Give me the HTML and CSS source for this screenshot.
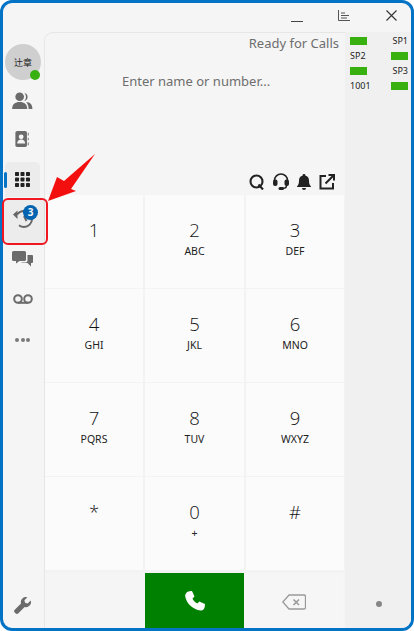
FILE: index.html
```html
<!DOCTYPE html>
<html lang="en">
<head>
<meta charset="utf-8">
<title>Dialer</title>
<link rel="stylesheet" href="styles.css">
</head>
<body>
<div class="window">
  <aside class="sidebar">
    <div class="avatar">辻章<span class="presence"></span></div>
    <button class="nav"><svg viewBox="0 0 22 18" width="21" height="17"><circle cx="8" cy="5" r="4.6" fill="#6b6b6b"/><path d="M0 18c0-5 3-7.500 8-7.500s8 2.500 8 7.500z" fill="#6b6b6b"/><path d="M13 1a4.300 4.300 0 0 1 0 8.400 6 6 0 0 0 0-8.400zM15 10.500c4 .3 6.500 2.500 6.500 7.500h-4c0-3-1-5.500-2.500-7.500z" fill="#6b6b6b"/></svg></button>
    <button class="nav nav-book"><svg viewBox="0 0 16 18" width="15" height="16"><rect x="0" y="0" width="13" height="18" rx="2" fill="#6b6b6b"/><circle cx="6.500" cy="6.500" r="2.700" fill="#f5f5f5"/><path d="M2 14c0-3 2-4.500 4.500-4.500S11 11 11 14z" fill="#f5f5f5"/><path d="M14.500 2v3M14.500 7.500v3M14.500 13v3" stroke="#8a8a8a" stroke-width="1.300"/></svg></button>
    <button class="nav nav-active">
      <span class="marker"></span>
      <svg viewBox="0 0 15 15" width="15" height="15" fill="#222"><rect x="0" y="0" width="4" height="4" rx=".8"/><rect x="5.500" y="0" width="4" height="4" rx=".8"/><rect x="11" y="0" width="4" height="4" rx=".8"/><rect x="0" y="5.500" width="4" height="4" rx=".8"/><rect x="5.500" y="5.500" width="4" height="4" rx=".8"/><rect x="11" y="5.500" width="4" height="4" rx=".8"/><rect x="0" y="11" width="4" height="4" rx=".8"/><rect x="5.500" y="11" width="4" height="4" rx=".8"/><rect x="11" y="11" width="4" height="4" rx=".8"/></svg>
    </button>
    <button class="nav nav-history">
      <svg viewBox="0 0 20 22" width="20" height="22" fill="none" stroke="#6b6b6b" stroke-width="2"><path d="M4 8.500C6 6 8.500 5 11 5a8 8 0 0 1 0 16c-2 0-3.500-.6-5-1.800"/><path d="M11 10l2.500 5"/><path d="M0 8.500L4.500 4.500V13z" fill="#6b6b6b" stroke="none"/></svg>
      <span class="badge">3</span>
    </button>
    <button class="nav nav-chat"><svg viewBox="0 0 21 16" width="21" height="16" fill="#6b6b6b"><path d="M1.500 0h11a1.500 1.500 0 0 1 1.500 1.500v7a1.500 1.500 0 0 1-1.500 1.500H7.500L4 12.500V10H1.500A1.500 1.500 0 0 1 0 8.500v-7A1.500 1.500 0 0 1 1.500 0z"/><path d="M15.500 4H20a1 1 0 0 1 1 1v6a1 1 0 0 1-1 1h-1v3.500L15.500 12H9.500v-.5h4a2 2 0 0 0 2-2z"/></svg></button>
    <button class="nav nav-voicemail"><svg viewBox="0 0 20 10" width="20" height="10" fill="none" stroke="#6b6b6b" stroke-width="2"><circle cx="5" cy="5" r="3.800"/><circle cx="15" cy="5" r="3.800"/><path d="M5 8.800h10"/></svg></button>
    <button class="nav nav-more"><span class="dot"></span><span class="dot"></span><span class="dot"></span></button>
    <button class="nav nav-tool"><svg viewBox="0 0 16 16" width="17" height="17"><path d="M15.700 3.300l-2.900 2.800-2.400-.6-.6-2.400L12.600.3a4.700 4.700 0 0 0-6 5.700L.7 11.900a1.900 1.900 0 0 0 0 2.700l.7.700a1.900 1.900 0 0 0 2.700 0L10 9.400a4.700 4.700 0 0 0 5.700-6.100z" fill="#6b6b6b"/></svg></button>
  </aside>

  <div class="content">
    <header class="titlebar">
      <span class="win-min"></span>
      <svg class="win-sort" viewBox="0 0 12 11" width="12" height="11" fill="none" stroke="#555" stroke-width="1"><path d="M.5 0v10.500H12M3 3h4M3 5.500h8M3 8h6"/></svg>
      <svg class="win-close" viewBox="0 0 11 11" width="11" height="11" fill="none" stroke="#333" stroke-width="1.100"><path d="M.5.500l10 10M10.500.500l-10 10"/></svg>
    </header>
    <div class="body">
      <main class="dialer">
        <div class="top">
          <div class="status">Ready for Calls</div>
          <div class="search">Enter name or number...</div>
          <div class="tools">
            <svg viewBox="0 0 16 16" width="16" height="16" fill="none" stroke="#222" stroke-width="2.100"><circle cx="7.500" cy="7.500" r="6"/><path d="M9.500 10.500l4.500 5"/></svg>
            <svg viewBox="0 0 16 17" width="16" height="17" fill="none" stroke="#222" stroke-width="1.500"><path d="M1.500 9V7.500a6.500 6.500 0 0 1 13 0V9"/><rect x="0" y="6.500" width="4.500" height="6.500" rx="2" fill="#222" stroke="none"/><rect x="11.500" y="6.500" width="4.500" height="6.500" rx="2" fill="#222" stroke="none"/><path d="M13.500 12.500c0 2-1.500 2.800-3.500 2.800"/><rect x="5.500" y="14" width="5.500" height="3" rx="1.500" fill="#222" stroke="none"/></svg>
            <svg viewBox="0 0 14 16" width="14" height="16" fill="#222"><path d="M7 0a1.300 1.300 0 0 1 1.300 1.500C10.800 2 12 4 12 6.500c0 3 .5 4.500 2 6V13H0v-.5c1.500-1.500 2-3 2-6C2 4 3.200 2 5.700 1.500A1.300 1.300 0 0 1 7 0z"/><path d="M5 14h4a2 2 0 0 1-4 0z"/></svg>
            <svg viewBox="0 0 16 16" width="16" height="16" fill="none" stroke="#222" stroke-width="2"><path d="M7 2H1.500v12.500H14V9"/><path d="M6.500 9.500L14.500 1.500M9.500 1H15v5.500"/></svg>
          </div>
        </div>
        <div class="keypad">
          <button class="key"><span class="digit">1</span></button>
          <button class="key"><span class="digit">2</span><span class="letters">ABC</span></button>
          <button class="key"><span class="digit">3</span><span class="letters">DEF</span></button>
          <button class="key"><span class="digit">4</span><span class="letters">GHI</span></button>
          <button class="key"><span class="digit">5</span><span class="letters">JKL</span></button>
          <button class="key"><span class="digit">6</span><span class="letters">MNO</span></button>
          <button class="key"><span class="digit">7</span><span class="letters">PQRS</span></button>
          <button class="key"><span class="digit">8</span><span class="letters">TUV</span></button>
          <button class="key"><span class="digit">9</span><span class="letters">WXYZ</span></button>
          <button class="key"><span class="digit">*</span></button>
          <button class="key"><span class="digit">0</span><span class="letters">+</span></button>
          <button class="key"><span class="digit">#</span></button>
        </div>
        <div class="actions">
          <span class="action-blank"></span>
          <button class="call"><svg viewBox="0 0 20 20" width="20" height="20" fill="#fff"><path d="M4.500.300L7 0l2.500 5.500-2 2c.8 2 2.500 3.800 4.800 5l2-2L20 13l-.3 3c-.2 2-2 3.700-4 3.500C7.500 18.500 1 12 .2 5 0 3 2 .6 4.500.300z"/></svg></button>
          <button class="erase"><svg viewBox="0 0 24 16" width="24" height="16" fill="none" stroke="#9a9a9a" stroke-width="1.300"><path d="M7 1h15a1.500 1.500 0 0 1 1.500 1.500v11A1.500 1.500 0 0 1 22 15H7L.8 8z"/><path d="M11.500 5.500l5.500 5.500M17 5.500L11.500 11" stroke-width="1.600"/></svg></button>
        </div>
      </main>
      <aside class="lines">
        <div class="lines-grid">
          <span class="led"></span><span class="line-name right">SP1</span>
          <span class="line-name">SP2</span><span class="led right"></span>
          <span class="led"></span><span class="line-name right">SP3</span>
          <span class="line-name">1001</span><span class="led right"></span>
        </div>
        <span class="lines-dot"></span>
      </aside>
    </div>
  </div>
</div>

<div class="callout"></div>
<svg class="arrow" viewBox="0 0 52 52" width="52" height="52"><path d="M49 2L18 29 11 25 2 49 30 39 25 37z" fill="#f40f0f"/></svg>
</body>
</html>
```
FILE: styles.css
```css
* { box-sizing: border-box; }
html, body { margin: 0; height: 100%; }
body { font-family: "Noto Sans", "Noto Sans CJK SC", sans-serif; background: #fff; overflow: hidden; }
button { border: 0; padding: 0; background: none; font: inherit; color: inherit; }

.window {
  width: 414px; height: 631px;
  display: flex;
  border: 3px solid #0373c6;
  border-radius: 12px;
  background: #f5f5f5;
  overflow: hidden;
}

.sidebar {
  width: 41px;
  flex: none;
  display: flex;
  flex-direction: column;
  align-items: flex-start;
  padding-top: 41px;
}
.avatar {
  position: relative;
  width: 36px; height: 36px;
  margin-left: 2px;
  flex: none;
  border-radius: 50%;
  background: #cfcfcf;
  font-family: "Noto Sans CJK SC", sans-serif;
  font-size: 9px;
  color: #222;
  display: flex; align-items: center; justify-content: center;
}
.presence {
  position: absolute; right: 1px; bottom: 0;
  width: 10px; height: 10px;
  border-radius: 50%;
  background: #37b010;
}
.nav {
  position: relative;
  width: 35px; height: 38px;
  flex: none;
  display: flex; align-items: center; justify-content: center;
  margin-left: 2px;
}
.avatar + .nav { margin-top: 1px; }
.nav-book { height: 39px; }
.nav-active { height: 35px; margin-top: 4px; background: #ececec; border-radius: 5px 5px 0 0; }
.marker {
  position: absolute; left: -1px; top: 10px;
  width: 3px; height: 16px;
  border-radius: 2px;
  background: #0373c6;
}
.nav-history { height: 40px; }
.badge {
  position: absolute; left: 18px; top: 8px;
  width: 15px; height: 15px;
  border-radius: 50%;
  background: #0368b8;
  color: #fff;
  font-size: 10px; font-weight: 700; line-height: 15px;
  text-align: center;
}
.nav-chat { height: 38px; margin-top: 3px; }
.nav-voicemail { height: 40px; margin-top: 1px; }
.nav-more { height: 40px; margin-top: 1px; gap: 1.500px; }
.dot { width: 4px; height: 4px; border-radius: 50%; background: #7a7a7a; }
.nav-tool { margin-top: auto; height: 49px; padding-top: 3px; }

.content { flex: 1; min-width: 0; display: flex; flex-direction: column; }
.titlebar {
  height: 29px;
  flex: none;
  position: relative;
  display: flex;
  align-items: center;
  padding-left: 247px;
}
.win-min { width: 12px; height: 1px; background: #444; margin-top: 8px; }
.win-sort { margin-left: 35px; margin-top: -4px; }
.win-close { margin-left: 36px; margin-top: -4px; }

.body { flex: 1; min-height: 0; display: flex; }
.dialer {
  width: 301px;
  flex: none;
  display: flex;
  flex-direction: column;
  border-left: 1px solid #e6e6e6;
  border-top: 1px solid #e6e6e6;
  border-radius: 9px 0 0 0;
  background: #f5f5f5;
}
.top { height: 162px; flex: none; position: relative; }
.status {
  position: absolute; right: 6px; top: 1px;
  font-size: 13px; color: #6e6e6e; line-height: 18px;
}
.search {
  position: absolute; left: 77px; top: 39px;
  font-size: 13px; color: #6e6e6e; line-height: 18px;
}
.tools {
  position: absolute; right: 10px; top: 140px;
  display: flex; align-items: center; gap: 8px;
}

.keypad {
  display: grid;
  grid-template-columns: 98px 99px 98px;
  grid-template-rows: repeat(4, 93px);
  column-gap: 2px; row-gap: 1px;
  background: #f3f3f3;
  height: 378px;
  flex: none;
}
.key {
  background: #fbfbfb;
  display: flex; flex-direction: column; align-items: center;
  padding-top: 22px;
  color: #111;
}
.digit { font-family: "Open Sans", sans-serif; font-weight: 300; font-size: 18.500px; line-height: 26px; }
.letters { font-size: 10.500px; line-height: 13px; margin-top: 2px; color: #222; }

.actions { height: 55px; flex: none; display: grid; grid-template-columns: 100px 99px 99px; }
.call { background: #008000; display: flex; align-items: center; justify-content: center; }
.erase { display: flex; align-items: center; justify-content: center; background: #f6f6f6; }
.erase svg { margin-top: 3px; }

.lines {
  flex: 1;
  background: #f0f0f0;
  position: relative;
  padding: 1px 3px 0 5px;
}
.lines-grid {
  display: grid;
  grid-template-columns: 1fr 1fr;
  grid-auto-rows: 15px;
  align-items: center;
}
.led { display: block; width: 17px; height: 8px; background: #37b010; }
.line-name { font-size: 9px; color: #222; line-height: 15px; }
.right { justify-self: end; }
.lines-dot {
  position: absolute; left: 31px; bottom: 21px;
  width: 6px; height: 6px; border-radius: 50%; background: #868686;
}

.callout {
  position: absolute; left: 2px; top: 198px;
  width: 46px; height: 47px;
  border: 2px solid #f01722;
  border-radius: 6px;
  background: rgba(0, 0, 0, 0.035);
}
.arrow { position: absolute; left: 46px; top: 152px; }
```
